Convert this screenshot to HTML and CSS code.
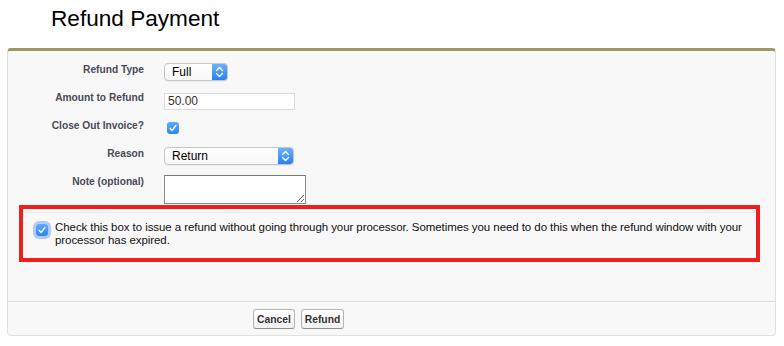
FILE: index.html
```html
<!DOCTYPE html>
<html lang="en">
    <head>
        <meta charset="UTF-8" />
        <meta name="viewport" content="width=device-width, initial-scale=1.0" />
        <title>Refund Payment</title>
        <link rel="stylesheet" href="styles.css">
    </head>
    <body>
        <div class="page">
            <h1 class="title">Refund Payment</h1>

            <div class="panel">
                <div class="fields">
                    <div class="row">
                        <label class="label">Refund Type</label>
                        <div class="field">
                            <div class="select select-type">
                                <span class="select-value">Full</span>
                                <span class="stepper">
                                    <svg width="15" height="16" viewBox="0 0 15 16">
                                        <path d="M4.5 6.5 L7.5 3.5 L10.5 6.5 M4.5 9.5 L7.5 12.5 L10.5 9.5" fill="none" stroke="#fff" stroke-width="1.4" stroke-linecap="round" stroke-linejoin="round" />
                                    </svg>
                                </span>
                            </div>
                        </div>
                    </div>
                    <div class="row">
                        <label class="label" for="amount">Amount to Refund</label>
                        <div class="field">
                            <input class="text-input" type="text" id="amount" value="50.00" />
                        </div>
                    </div>
                    <div class="row">
                        <label class="label">Close Out Invoice?</label>
                        <div class="field field-check">
                            <span class="checkbox">
                                <svg width="12" height="12" viewBox="0 0 12 12">
                                    <path d="M3.2 6.4 L5.1 8.4 L8.9 3.6" fill="none" stroke="#fff" stroke-width="1.5" stroke-linecap="round" stroke-linejoin="round" />
                                </svg>
                            </span>
                        </div>
                    </div>
                    <div class="row">
                        <label class="label">Reason</label>
                        <div class="field">
                            <div class="select select-reason">
                                <span class="select-value">Return</span>
                                <span class="stepper">
                                    <svg width="15" height="16" viewBox="0 0 15 16">
                                        <path d="M4.5 6.5 L7.5 3.5 L10.5 6.5 M4.5 9.5 L7.5 12.5 L10.5 9.5" fill="none" stroke="#fff" stroke-width="1.4" stroke-linecap="round" stroke-linejoin="round" />
                                    </svg>
                                </span>
                            </div>
                        </div>
                    </div>
                    <div class="row row-note">
                        <label class="label" for="note">Note (optional)</label>
                        <div class="field">
                            <textarea class="note" id="note"></textarea>
                        </div>
                    </div>
                </div>

                <div class="notice">
                    <div class="notice-inner">
                        <span class="checkbox checkbox-focus">
                            <svg width="12" height="12" viewBox="0 0 12 12">
                                <path d="M3.2 6.4 L5.1 8.4 L8.9 3.6" fill="none" stroke="#fff" stroke-width="1.5" stroke-linecap="round" stroke-linejoin="round" />
                            </svg>
                        </span>
                        <p class="notice-text">Check this box to issue a refund without going through your processor. Sometimes you need to do this when the refund window with your processor has expired.</p>
                    </div>
                </div>

                <div class="buttons">
                    <button class="btn" type="button">Cancel</button>
                    <button class="btn" type="submit">Refund</button>
                </div>
            </div>
        </div>
    </body>
</html>
```

FILE: styles.css
```css
body {
    font-family: "Liberation Sans", Arial, sans-serif;
    margin: 0;
    padding: 0;
    background-color: #fff;
    color: #000;
}
.page {
    padding: 0 8px 0 7px;
}
.title {
    margin: 6px 0 0 44px;
    font-size: 22.6px;
    font-weight: normal;
    line-height: 25px;
    height: 25px;
}
.panel {
    margin-top: 17px;
    background-color: #f8f8f8;
    border: 1px solid #e0e0e0;
    border-top: 3px solid #9c9a62;
    border-radius: 4px;
}
.fields {
    padding-top: 9px;
}
.row {
    display: grid;
    grid-template-columns: 136px 1fr;
    column-gap: 20px;
    height: 28px;
}
.row-note {
    height: 33px;
}
.label {
    padding-top: 3px;
    text-align: right;
    font-size: 10.2px;
    font-weight: bold;
    line-height: 13px;
    color: #4a4a56;
}
.field {
    padding-top: 3px;
}
.field-check {
    padding: 6px 0 0 3px;
}
.select {
    display: flex;
    box-sizing: border-box;
    height: 18px;
    background: linear-gradient(#fff, #f7f7f7);
    border: 1px solid #c6c6c6;
    border-radius: 4px;
    box-shadow: 0 1px 1px rgba(0, 0, 0, 0.06);
    overflow: hidden;
}
.select-type {
    width: 64px;
}
.select-reason {
    width: 130px;
}
.select-value {
    flex: 1;
    padding-left: 7px;
    font-size: 12px;
    line-height: 16px;
    color: #000;
}
.stepper {
    display: flex;
    align-items: center;
    width: 15px;
    background: linear-gradient(#6ab1fa, #2a81f3);
}
.text-input {
    box-sizing: border-box;
    width: 131px;
    height: 17px;
    margin: 0;
    padding: 0 3px;
    border: 1px solid #dcdcdc;
    background-color: #fff;
    font-family: "Liberation Sans", Arial, sans-serif;
    font-size: 12px;
    color: #333;
    outline: none;
}
.checkbox {
    display: block;
    width: 12px;
    height: 12px;
    border-radius: 3px;
    background: linear-gradient(#5fa9fa, #2f86f4);
}
.checkbox svg {
    display: block;
}
.note {
    display: block;
    box-sizing: border-box;
    width: 142px;
    height: 29px;
    margin: 0;
    border: 1px solid #8c8c8c;
    border-top-color: #7a7a7a;
    background-color: #fff;
}
.notice {
    margin: 0 15px 39px 11px;
    padding-top: 3px;
    border: 4px solid #f01f1f;
}
.notice-inner {
    display: flex;
    align-items: flex-start;
    border-top: 1px solid #e8e8e8;
    padding: 8px 6px 11px 13px;
}
.checkbox-focus {
    flex: none;
    margin: 3px 7px 0 0;
    box-shadow: 0 0 0 3px rgba(115, 168, 245, 0.55);
}
.notice-text {
    margin: 0;
    font-size: 11.5px;
    letter-spacing: -0.07px;
    line-height: 13px;
    color: #111;
}
.buttons {
    display: flex;
    gap: 6px;
    padding: 7px 0 6px 245px;
    border-top: 1px solid #dedede;
}
.btn {
    height: 20px;
    padding: 0 3px;
    background: linear-gradient(#fff, #f1f1f1);
    border: 1px solid #b5b5b5;
    border-bottom-color: #8f8f8f;
    border-radius: 3px;
    font-family: "Liberation Sans", Arial, sans-serif;
    font-size: 10.3px;
    font-weight: bold;
    color: #333;
    cursor: pointer;
}
```
